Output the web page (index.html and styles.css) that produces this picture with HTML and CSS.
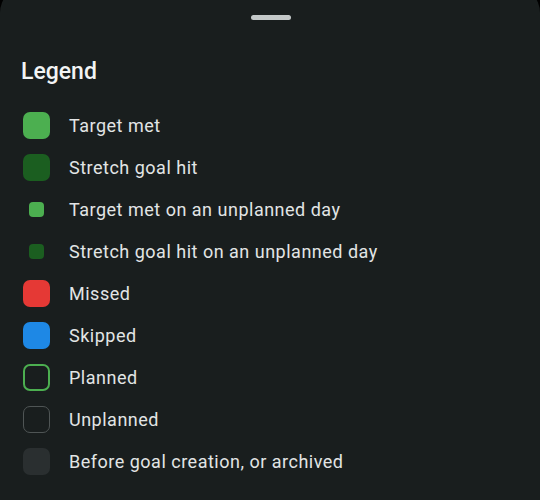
FILE: index.html
```html
<!DOCTYPE html>
<html>
<head>
<meta charset="utf-8">
<link rel="stylesheet" href="styles.css">
</head>
<body>
<div class="sheet">
  <div class="handle"></div>
  <h1 class="title">Legend</h1>
  <ul class="legend">
    <li class="row"><span class="swatch"><span class="box big met"></span></span><span class="label">Target met</span></li>
    <li class="row"><span class="swatch"><span class="box big stretch"></span></span><span class="label">Stretch goal hit</span></li>
    <li class="row"><span class="swatch"><span class="box small met"></span></span><span class="label">Target met on an unplanned day</span></li>
    <li class="row"><span class="swatch"><span class="box small stretch"></span></span><span class="label">Stretch goal hit on an unplanned day</span></li>
    <li class="row"><span class="swatch"><span class="box big missed"></span></span><span class="label">Missed</span></li>
    <li class="row"><span class="swatch"><span class="box big skipped"></span></span><span class="label">Skipped</span></li>
    <li class="row"><span class="swatch"><span class="box big planned"></span></span><span class="label">Planned</span></li>
    <li class="row"><span class="swatch"><span class="box big unplanned"></span></span><span class="label">Unplanned</span></li>
    <li class="row"><span class="swatch"><span class="box big before"></span></span><span class="label">Before goal creation, or archived</span></li>
  </ul>
</div>
</body>
</html>
```
FILE: styles.css
```css
html, body {
  margin: 0;
  padding: 0;
  background: #000;
  height: 100%;
  overflow: hidden;
}
.sheet {
  margin-top: -15px;
  height: 530px;
  background: #191e1e;
  border-radius: 28px 28px 0 0;
  font-family: Roboto, "Noto Sans", sans-serif;
  display: flex;
  flex-direction: column;
}
.handle {
  align-self: center;
  width: 40px;
  height: 5px;
  border-radius: 3px;
  background: #c3c8c8;
  margin-top: 30px;
  margin-left: 1px;
}
.title {
  margin: 38px 0 0 21px;
  font-size: 23px;
  line-height: 28px;
  font-weight: 500;
  color: #f2f4f4;
}
.legend {
  list-style: none;
  margin: 18px 0 0 0;
  padding: 0;
}
.row {
  height: 42px;
  display: flex;
  align-items: center;
  padding-left: 23px;
}
.swatch {
  width: 27px;
  height: 27px;
  display: flex;
  align-items: center;
  justify-content: center;
  margin-right: 19px;
}
.box {
  box-sizing: border-box;
  display: block;
}
.big {
  width: 27px;
  height: 27px;
  border-radius: 7px;
}
.small {
  width: 15px;
  height: 15px;
  border-radius: 4px;
}
.met { background: #4caf50; }
.stretch { background: #1b5e20; }
.missed { background: #e53935; }
.skipped { background: #1e88e5; }
.planned { border: 2px solid #4caf50; }
.unplanned { border: 1.5px solid #4f5555; }
.before { background: #2a2f30; }
.label {
  font-size: 18px;
  color: #e2e5e5;
  letter-spacing: 0.5px;
}
```
